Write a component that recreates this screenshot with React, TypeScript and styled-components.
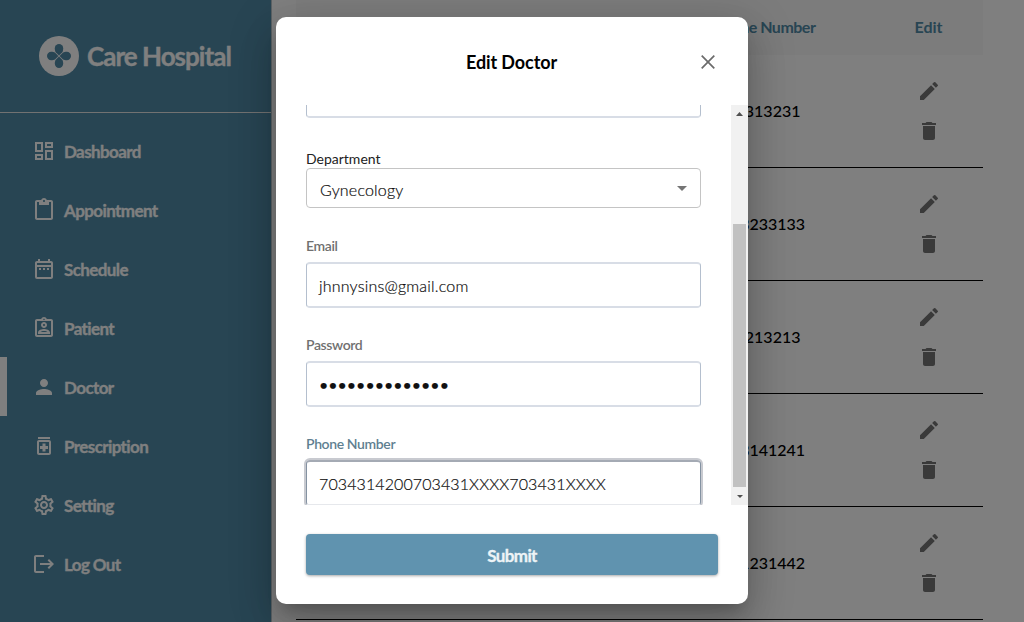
import React from "react";
import styled, { createGlobalStyle } from "styled-components";
import {
  MdOutlineDashboard,
  MdContentPaste,
  MdOutlineDateRange,
  MdOutlineAssignmentInd,
  MdPerson,
  MdOutlineMedication,
  MdOutlineSettings,
  MdEdit,
  MdDelete,
  MdArrowDropDown,
} from "react-icons/md";

const GlobalStyle = createGlobalStyle`
  * { box-sizing: border-box; }
  html, body { margin: 0; height: 100%; overflow: hidden; }
  body { font-family: Lato, "Liberation Sans", sans-serif; font-size: 16px; background: #fff; }
`;

const Page = styled.div`
  display: flex;
  width: 1024px;
  height: 622px;
  overflow: hidden;
`;

const Sidebar = styled.nav`
  width: 272px;
  flex: none;
  background: #508ba7;
  border-right: 1px solid #b9c4ca;
  color: #fff;
`;

const Brand = styled.div`
  display: flex;
  align-items: center;
  gap: 8px;
  height: 113px;
  padding-left: 39px;
  border-bottom: 1px solid #e4e4e4;
  margin-bottom: 8px;
`;

const BrandName = styled.span`
  font-size: 26px;
  font-weight: 700;
  letter-spacing: -0.98px;
  line-height: 32px;
  white-space: nowrap;
  -webkit-text-stroke: 0.3px currentColor;
`;

const NavItem = styled.div<{ $active?: boolean }>`
  display: flex;
  align-items: center;
  gap: 8px;
  height: 59px;
  padding-left: 25px;
  border-left: 7px solid ${(p) => (p.$active ? "#fff" : "transparent")};
  font-size: 17px;
  font-weight: 700;
  letter-spacing: -0.6px;
  line-height: 24px;
  svg { flex: none; }
`;

const NavLabel = styled.span`
  padding-top: 2px;
  -webkit-text-stroke: 0.3px currentColor;
`;

const Main = styled.main`
  width: 687px;
  margin-left: 24px;
  flex: none;
`;

const HeadRow = styled.div`
  display: flex;
  height: 55px;
  align-items: center;
  padding-bottom: 1px;
  background: #f8f8f8;
  color: #508ba7;
  font-weight: 700;
`;

const Row = styled.div`
  display: flex;
  height: 113px;
  align-items: center;
  border-bottom: 1px solid #000;
  font-weight: 500;
`;

const PhoneCell = styled.div<{ $head?: boolean }>`
  width: 213px;
  margin-left: 365px;
  padding: ${(p) => (p.$head ? "0 6px 2px 0" : "0 0 2px 1px")};
  letter-spacing: ${(p) => (p.$head ? "-0.5px" : "0")};
  text-align: center;
  white-space: nowrap;
`;

const EditCell = styled.div`
  width: 109px;
  display: flex;
  flex-direction: column;
  align-items: center;
  gap: 16px;
  color: #757575;
`;

const EditHeading = styled.div`
  width: 109px;
  padding-bottom: 2px;
  text-align: center;
`;

const Backdrop = styled.div`
  position: absolute;
  inset: 0;
  width: 1024px;
  height: 622px;
  padding: 17px 0 0 276px;
  overflow: hidden;
  background: rgba(0, 0, 0, 0.5);
`;

const Dialog = styled.section`
  width: 472px;
  height: 587px;
  border-radius: 10px;
  background: #fff;
  overflow: hidden;
  box-shadow: 0 11px 15px -7px rgba(0, 0, 0, 0.2), 0 24px 38px 3px rgba(0, 0, 0, 0.14),
    0 9px 46px 8px rgba(0, 0, 0, 0.12);
`;

const DialogHead = styled.header`
  display: grid;
  grid-template-columns: 80px 1fr 80px;
  align-items: center;
  justify-items: center;
  height: 88px;
  svg { margin-top: 1px; }
`;

const Title = styled.h2`
  grid-column: 2;
  margin: 0;
  padding: 1px 1px 0 0;
  font-size: 18px;
  font-weight: 700;
  letter-spacing: -0.1px;
`;

const ScrollArea = styled.div`
  display: flex;
  justify-content: space-between;
  height: 400px;
  overflow: hidden;
`;

const Fields = styled.div`
  width: 399px;
  margin-left: 28px;
  padding: 0 2px;
`;

const Field = styled.div`
  height: 99px;
`;

const NameInput = styled.div`
  height: 46px;
  margin-top: -33px;
  border: 1px solid #b4bfce;
  border-bottom: 2px solid #d8dde6;
  border-radius: 4px;
`;

const Label = styled.div<{ $focus?: boolean }>`
  height: 26px;
  font-size: 14px;
  font-weight: 600;
  line-height: 20px;
  letter-spacing: -0.38px;
  color: ${(p) => (p.$focus ? "#5f7f91" : "#707070")};
`;

const Input = styled.div<{ $focus?: boolean; $spacing?: number; $weight?: number }>`
  display: flex;
  align-items: center;
  height: 46px;
  padding: 1px 12px 0;
  border: solid ${(p) => (p.$focus ? "#8492a2" : "#b4bfce")};
  border-width: 2px 1px;
  border-top-color: ${(p) => (p.$focus ? "#a4aab4" : "#d8dde6")};
  border-bottom-color: ${(p) => (p.$focus ? "#e6e8ec" : "#d8dde6")};
  border-radius: 4px;
  box-shadow: ${(p) => (p.$focus ? "0 0 0 2px #c8cad0" : "none")};
  color: #111;
  font-weight: ${(p) => p.$weight ?? 300};
  letter-spacing: ${(p) => p.$spacing ?? 0}px;
  -webkit-text-stroke: 0.2px currentColor;
`;

const SelectLabel = styled.div`
  margin-top: 31px;
  height: 19px;
  font-size: 14px;
  line-height: 20px;
  color: #222;
`;

const Select = styled.div`
  display: flex;
  align-items: center;
  justify-content: space-between;
  height: 40px;
  margin-bottom: 28px;
  padding: 3px 6px 0 13px;
  border: 1px solid #c4c4c4;
  border-radius: 4px;
  color: #111;
  font-weight: 300;
  letter-spacing: 0.2px;
  -webkit-text-stroke: 0.2px currentColor;
  svg { color: #757575; margin-top: -3px; }
`;

const Scrollbar = styled.div`
  display: flex;
  flex-direction: column;
  align-items: center;
  width: 17px;
  background: #f1f1f1;
`;

const ScrollButton = styled.div<{ $height: number }>`
  display: grid;
  place-items: center;
  width: 17px;
  height: ${(p) => p.$height}px;
`;

const ScrollThumb = styled.div`
  width: 13px;
  height: 263px;
  margin-top: auto;
  background: #c1c1c1;
`;

const Submit = styled.button`
  display: block;
  width: 412px;
  height: 41px;
  margin: 29px 0 0 30px;
  padding: 1px 0 0;
  border: 0;
  border-radius: 4px;
  background: #6093af;
  color: #edf3f6;
  font: 700 17px Lato, sans-serif;
  letter-spacing: -0.6px;
  -webkit-text-stroke: 0.3px currentColor;
  box-shadow: 0 1px 3px rgba(0, 0, 0, 0.35);
`;

const Logo = () => (
  <svg width="40" height="40" viewBox="0 0 40 40">
    <circle cx="20" cy="20" r="20" fill="#fff" />
    <g fill="#508ba7">
      {[0, 90, 180, 270].map((a) => (
        <path
          key={a}
          transform={`rotate(${a} 20 20)`}
          d="M20 19.400 16.800 16.200C16 15.200 15.800 13.500 15.800 12.200a4.200 4.200 0 0 1 8.400 0C24.200 13.500 24 15.200 23.200 16.200Z"
        />
      ))}
    </g>
  </svg>
);

const LogoutIcon = () => (
  <svg width="24" height="24" viewBox="0 0 24 24" fill="currentColor">
    <path d="M17 7l-1.410 1.410L18.170 11H8v2h10.170l-2.580 2.580L17 17l5-5zM4 5h8V3H4c-1.100 0-2 .9-2 2v14c0 1.100.9 2 2 2h8v-2H4z" />
  </svg>
);

const nav = [
  { label: "Dashboard", icon: <MdOutlineDashboard size={24} /> },
  { label: "Appointment", icon: <MdContentPaste size={24} /> },
  { label: "Schedule", icon: <MdOutlineDateRange size={24} /> },
  { label: "Patient", icon: <MdOutlineAssignmentInd size={24} /> },
  { label: "Doctor", icon: <MdPerson size={24} />, active: true },
  { label: "Prescription", icon: <MdOutlineMedication size={24} /> },
  { label: "Setting", icon: <MdOutlineSettings size={24} /> },
  { label: "Log Out", icon: <LogoutIcon /> },
];

const phones = ["2313231", "13233133", "3213213", "13141241", "11231442"];

export default function App() {
  return (
    <>
      <GlobalStyle />
      <Page>
        <Sidebar>
          <Brand>
            <Logo />
            <BrandName>Care Hospital</BrandName>
          </Brand>
          {nav.map((n) => (
            <NavItem key={n.label} $active={n.active}>
              {n.icon}
              <NavLabel>{n.label}</NavLabel>
            </NavItem>
          ))}
        </Sidebar>
        <Main>
          <HeadRow>
            <PhoneCell $head>Phone Number</PhoneCell>
            <EditHeading>Edit</EditHeading>
          </HeadRow>
          {phones.map((p) => (
            <Row key={p}>
              <PhoneCell>{p}</PhoneCell>
              <EditCell>
                <MdEdit size={24} />
                <MdDelete size={24} />
              </EditCell>
            </Row>
          ))}
        </Main>
      </Page>
      <Backdrop>
        <Dialog>
          <DialogHead>
            <Title>Edit Doctor</Title>
            <svg width="14" height="14" viewBox="0 0 14 14" stroke="#6b6b6b" strokeWidth="1.700">
              <path d="M.7.7l12.600 12.600M13.300.7.7 13.300" />
            </svg>
          </DialogHead>
          <ScrollArea>
            <Fields>
              <NameInput />
              <SelectLabel>Department</SelectLabel>
              <Select>
                Gynecology
                <MdArrowDropDown size={24} />
              </Select>
              <Field>
                <Label>Email</Label>
                <Input $spacing={0.2}>jhnnysins@gmail.com</Input>
              </Field>
              <Field>
                <Label>Password</Label>
                <Input $weight={400}>••••••••••••••</Input>
              </Field>
              <Field>
                <Label $focus>Phone Number</Label>
                <Input $focus $spacing={0.1}>7034314200703431XXXX703431XXXX</Input>
              </Field>
            </Fields>
            <Scrollbar>
              <ScrollButton $height={17}>
                <svg width="7" height="4" viewBox="0 0 7 4" fill="#505050">
                  <path d="M0 4 3.500 0 7 4z" />
                </svg>
              </ScrollButton>
              <ScrollThumb />
              <ScrollButton $height={18}>
                <svg width="6" height="3" viewBox="0 0 6 3" fill="#505050">
                  <path d="M0 0h6L3 3z" />
                </svg>
              </ScrollButton>
            </Scrollbar>
          </ScrollArea>
          <Submit>Submit</Submit>
        </Dialog>
      </Backdrop>
    </>
  );
}
